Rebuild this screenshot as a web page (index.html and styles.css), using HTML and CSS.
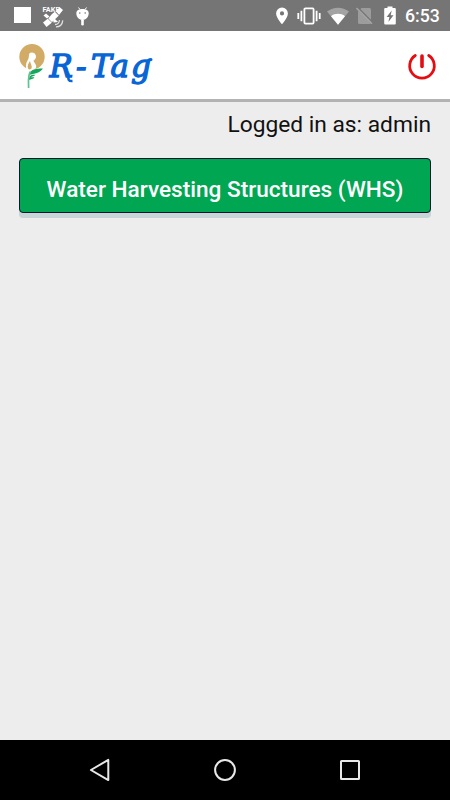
FILE: index.html
```html
<!DOCTYPE html>
<html lang="en">
<head>
  <meta charset="UTF-8">
  <meta name="viewport" content="width=device-width, initial-scale=1.0">
  <title>R-Tag</title>
  <link rel="stylesheet" href="styles.css">
</head>
<body>
  <!-- Status bar -->
  <div class="status-bar">
    <div class="notifications">
      <div class="square-icon"></div>
      <svg class="fake-icon" width="22" height="24" viewBox="0 0 22 24" fill="#fff">
        <text class="fake-text" x="0.5" y="7.5" textLength="17" lengthAdjust="spacingAndGlyphs">FAKE</text>
        <path d="M14 7.5 L17.5 3 L21 6 L17 11 Z"/>
        <path d="M9.5 10.5 L13 7.5 L17 11.5 L9.500 18.500 L6 15 Z"/>
        <path d="M1 18.500 L6 14.500 L10 18.500 L4.500 23 Z M1.500 11.500 L4 9.500 L7.500 12.500 L5 14.500 Z"/>
        <path d="M11 13 L16 18 L11.500 18.500 Z"/>
        <path d="M13 20.500 q4 0 4.500 -4.500 M14 22.800 q6 0 6.800 -6.500" fill="none" stroke="#e0e0e0" stroke-width="1.300"/>
        <path d="M5.500 14 L10.500 19 M13 7.500 L17.500 12" stroke="#757575" stroke-width="0.700"/>
      </svg>
      <svg class="android-icon" width="13" height="21" viewBox="0 0 13 21" fill="#fff">
        <path d="M0.300 7 C0.300 1.500 12.700 1.500 12.700 7 C12.700 11 10 14 6.500 14 C3 14 0.300 11 0.300 7 Z"/>
        <path d="M2.500 1.500 L4 3.500 M10.500 1.500 L9 3.500" stroke="#fff" stroke-width="1"/>
        <rect x="5.200" y="13" width="2.600" height="6.500" rx="1.200"/>
        <circle cx="3.800" cy="7" r="0.800" fill="#757575"/>
        <circle cx="9.200" cy="7" r="0.800" fill="#757575"/>
      </svg>
    </div>
    <div class="system">
      <svg class="pin-icon" width="12" height="18" viewBox="0 0 12 18">
        <path fill="#fff" fill-rule="evenodd" d="M6 0.500 A5.900 5.900 0 0 0 0.100 6.400 C0.100 10.500 6 17.300 6 17.300 C6 17.300 11.900 10.500 11.900 6.400 A5.900 5.900 0 0 0 6 0.500 Z M6 4.300 a2.100 2.100 0 1 1 0 4.200 a2.100 2.100 0 1 1 0 -4.200 Z"/>
      </svg>
      <svg class="vibrate-icon" width="24" height="18" viewBox="0 0 24 18" fill="none" stroke="#fff" stroke-width="1.800">
        <rect x="7.400" y="1.400" width="9.200" height="15.200" rx="1"/>
        <path d="M4.400 3.800 V14.200 M19.600 3.800 V14.200 M1.300 6 V12 M22.700 6 V12"/>
      </svg>
      <svg class="wifi-icon" width="22" height="18" viewBox="0 0 22 18">
        <path fill="#a3a3a3" d="M0 4.500 C6.500 -0.600 15.500 -0.600 22 4.500 L11 17.700 Z"/>
        <path fill="#fff" d="M4 9.200 C8 6 14 6 18 9.200 L11 17.700 Z"/>
      </svg>
      <svg class="sim-icon" width="17" height="18" viewBox="0 0 17 18">
        <path fill="#9c9c9c" d="M2.500 4 L5.500 1 H13.500 Q15 1 15 2.500 V15.500 Q15 17 13.500 17 H3.500 Q2 17 2 15.500 V4.500 Z"/>
        <path d="M1.500 0.300 L17 16" stroke="#757575" stroke-width="1.600"/>
        <path d="M0.500 1 L16 16.800" stroke="#a3a3a3" stroke-width="1.600"/>
      </svg>
      <svg class="battery-icon" width="12" height="19" viewBox="0 0 12 19">
        <path fill="#fff" d="M3.500 0.500 H8.500 V2 H10.800 Q11.800 2 11.800 3 V17.500 Q11.800 18.500 10.800 18.500 H1.200 Q0.200 18.500 0.200 17.500 V3 Q0.200 2 1.200 2 H3.500 Z"/>
        <path fill="#757575" d="M7.700 4.500 L2.600 11 H5.400 L4.400 16 L9.500 9.300 H6.700 Z"/>
      </svg>
      <span class="time">6:53</span>
    </div>
  </div>

  <!-- App header -->
  <header class="header">
    <svg class="logo" width="140" height="50" viewBox="0 0 140 50">
      <circle cx="13" cy="13.800" r="12.700" fill="#d2ab67"/>
      <path fill="#fff" d="M12.500 9.500 C15.500 9.500 17.200 11.500 17 14 C16.800 16 15.500 17 14.500 17.500 C15 20 18 21.500 17 24.500 L15 28 H8 C6.500 25 6.500 20.500 8.500 17.500 C10 15.500 9.800 13 10 11.500 C10.300 10.300 11 9.500 12.500 9.500 Z"/>
      <path fill="#d2ab67" d="M11 18 C9.500 20.500 8 22.500 9 25.500 Q10.500 27.500 12.500 25.500 C13.500 23 11.500 21 11 18 Z"/>
      <path fill="#16a65c" d="M10 32 C11.500 26 17 25.500 24 25.500 C21 30 15.500 30.500 10 32 Z M9.800 37 C10 32.500 12.500 31.500 16.500 31.800 C15 33.500 13 33.500 11.500 34.500 C13 34 14.500 34 15.500 34.500 C14 36 12 36 9.800 37 Z"/>
      <path d="M11.500 28.500 C8.800 32 9.500 37 9.600 45" fill="none" stroke="#5fc391" stroke-width="1.700"/>
      <text class="logo-text" x="30.500 57 72 91.500 112" y="34">R-Tag</text>
      <!-- tail of the R and ear of the g -->
      <path d="M49 30 C50.500 33 47 38.500 53.500 38" fill="none" stroke="#0765d6" stroke-width="2.600"/>
      <path d="M128.500 19 Q129.500 16.500 132 16.500" fill="none" stroke="#0765d6" stroke-width="3" stroke-linecap="round"/>
    </svg>
    <svg class="power" width="30" height="30" viewBox="0 0 30 30" fill="none" stroke="#e60d12" stroke-width="2.800" stroke-linecap="round">
      <path d="M8.300 4.500 A12.300 12.300 0 1 0 21.700 4.500"/>
      <path d="M15 5 V15.500" stroke-width="3.600"/>
    </svg>
  </header>

  <main class="content">
    <p class="user">Logged in as: admin</p>
    <button class="menu-button">Water Harvesting Structures (WHS)</button>
  </main>

  <!-- Navigation bar -->
  <nav class="nav-bar">
    <svg width="26" height="26" viewBox="0 0 26 26"><path d="M3.900 13 L21.300 2.900 V23.100 Z"/></svg>
    <svg width="26" height="26" viewBox="0 0 26 26"><circle cx="13" cy="13" r="9.900"/></svg>
    <svg width="26" height="26" viewBox="0 0 26 26"><rect x="4" y="4" width="18" height="18" rx="0.500"/></svg>
  </nav>
</body>
</html>
```
FILE: styles.css
```css
body {
  margin: 0;
  height: 800px;
  display: flex;
  flex-direction: column;
  font-family: Roboto, sans-serif;
  background-color: #ededed;
}
svg {
  display: block;
  flex: none;
}
/* Status bar */
.status-bar {
  height: 31px;
  box-sizing: border-box;
  padding: 0 10px 0 14px;
  display: flex;
  justify-content: space-between;
  background-color: #757575;
  color: #fff;
}
.notifications,
.system {
  display: flex;
  align-items: flex-start;
}
.square-icon {
  width: 17px;
  height: 16px;
  margin-top: 7px;
  background-color: #fff;
}
.fake-icon {
  margin: 4px 0 0 11px;
}
.fake-text {
  font-size: 7.5px;
  font-weight: bold;
}
.android-icon {
  margin: 6px 0 0 12px;
}
.pin-icon {
  margin-top: 7px;
}
.vibrate-icon {
  margin: 7px 0 0 9px;
}
.wifi-icon {
  margin: 7px 0 0 6px;
}
.sim-icon {
  margin: 7px 0 0 7px;
}
.battery-icon {
  margin: 6px 0 0 11px;
}
.time {
  width: 35px;
  margin: 6px 0 0 9px;
  font-size: 17.7px;
  line-height: 21px;
  font-weight: 500;
  white-space: nowrap;
}
/* White header with the logo and the log out icon */
.header {
  height: 71px;
  box-sizing: border-box;
  padding: 12px 13px 0 19px;
  display: flex;
  justify-content: space-between;
  align-items: flex-start;
  background-color: #fff;
  border-bottom: 3px solid #b3b3b3;
}
.logo-text {
  font-family: "DejaVu Serif", serif;
  font-size: 31px;
  font-style: italic;
  fill: #0765d6;
  stroke: #0765d6;
  stroke-width: 1.3px;
}
.power {
  margin-top: 8px;
}
/* Page content */
.content {
  flex: 1;
  padding: 9px 19px 0;
}
.user {
  margin: 0 0 20px;
  font-size: 22.75px;
  line-height: 28px;
  height: 27px;
  text-align: right;
  color: #111;
}
.menu-button {
  display: block;
  width: 100%;
  height: 55px;
  padding: 7px 0 0;
  font-family: inherit;
  font-size: 22.6px;
  font-weight: 500;
  white-space: nowrap;
  color: #fff;
  background-color: #00a651;
  border: 1.5px solid #0b1533;
  border-radius: 4px;
  box-shadow: 0 5px 0 #c8d5d5;
}
/* Navigation bar */
.nav-bar {
  height: 60px;
  box-sizing: border-box;
  padding: 0 87px;
  display: flex;
  justify-content: space-between;
  align-items: center;
  background-color: #000;
}
.nav-bar svg {
  fill: none;
  stroke: #e8e8e8;
  stroke-width: 2;
  stroke-linejoin: round;
}
```
